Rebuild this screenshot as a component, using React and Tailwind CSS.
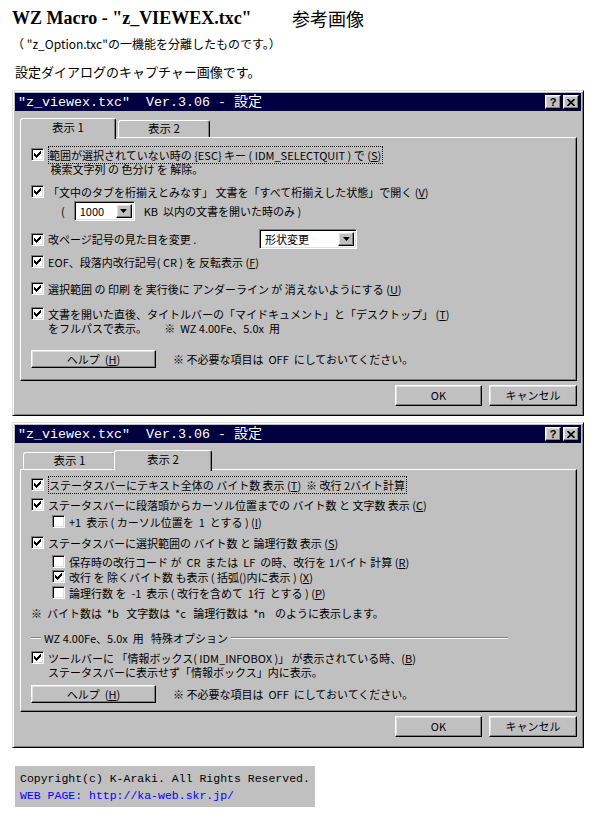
import React from 'react';

const raised =
  'border border-t-white border-l-white border-r-black border-b-black shadow-[inset_-1px_-1px_#808080,inset_1px_1px_#dfdfdf]';
const sunken =
  'border border-t-[#808080] border-l-[#808080] border-r-white border-b-white shadow-[inset_1px_1px_#000,inset_-1px_-1px_#dfdfdf]';
const jp = "font-['Noto_Sans_CJK_JP',sans-serif]";
const mono = "font-['Liberation_Mono','Noto_Sans_CJK_JP',monospace]";

// 7x7 pixel check mark, row by row
const CHECK_ROWS = [[6], [5, 6], [0, 4, 5, 6], [0, 1, 3, 4, 5], [0, 1, 2, 3, 4], [1, 2, 3], [2]];

function Check({ on }) {
  return (
    <span className={`flex h-[13px] w-[13px] shrink-0 items-center justify-center bg-white ${sunken}`}>
      {on && (
        <svg width="7" height="7" viewBox="0 0 7 7" shapeRendering="crispEdges">
          {CHECK_ROWS.map((cols, y) =>
            cols.map((x) => <rect key={`${x}-${y}`} x={x} y={y} width="1" height="1" fill="#000" />)
          )}
        </svg>
      )}
    </span>
  );
}

const K = ({ children }) => (
  <>
    (<u className="underline-offset-1">{children}</u>)
  </>
);

function Row({ on, className = '', children }) {
  return (
    <div className={`flex items-start gap-[4px] ${className}`}>
      <Check on={on} />
      <div className="whitespace-pre leading-[14px]">{children}</div>
    </div>
  );
}

function Btn({ className = '', children }) {
  return (
    <div className={`flex items-center justify-center bg-[#c0c0c0] text-[11px] ${raised} ${className}`}>
      {children}
    </div>
  );
}

function Combo({ className = '', children }) {
  return (
    <div className={`flex h-[20px] items-stretch bg-white p-[2px] ${sunken} ${className}`}>
      <span className="flex-1 pl-[3px] text-[11px] leading-[14px]">{children}</span>
      <span className={`flex w-[16px] items-center justify-center bg-[#c0c0c0] ${raised}`}>
        <svg width="7" height="4" viewBox="0 0 7 4">
          <path d="M0 0h7L3.5 4z" fill="#000" />
        </svg>
      </span>
    </div>
  );
}

function TitleBar() {
  return (
    <div className="flex h-[18px] shrink-0 items-center justify-between bg-[#000040] pl-[3px] pr-[2px]">
      <span className={`${mono} whitespace-pre text-[13.33px] leading-[18px] text-white`}>
        "z_viewex.txc"  Ver.3.06 - <span className="text-[14px]">設定</span>
      </span>
      <div className="flex gap-[2px]">
        <span className={`flex h-[14px] w-[16px] items-center justify-center bg-[#c0c0c0] ${raised}`}>
          <span className="font-['Liberation_Sans',sans-serif] text-[11px] font-bold leading-none">?</span>
        </span>
        <span className={`flex h-[14px] w-[16px] items-center justify-center bg-[#c0c0c0] ${raised}`}>
          <svg width="8" height="7" viewBox="0 0 8 7">
            <path d="M0.5 0l7 7M7.5 0l-7 7" stroke="#000" strokeWidth="1.6" />
          </svg>
        </span>
      </div>
    </div>
  );
}

function Tab({ sel, className = '', children }) {
  return (
    <div
      className={`flex items-center justify-center rounded-t-[3px] border border-b-0 border-t-white border-l-white border-r-black bg-[#c0c0c0] text-[11.5px] shadow-[inset_-1px_0_#808080] ${
        sel ? 'relative z-10 -mb-[2px] h-[21px] pb-[2px]' : 'h-[17px]'
      } ${className}`}
    >
      {children}
    </div>
  );
}

function Dialog({ tab, panelClass, children }) {
  return (
    <div
      className={`ml-[12px] flex h-[326px] w-[572px] flex-col border border-t-[#dfdfdf] border-l-[#dfdfdf] border-r-black border-b-black bg-[#c0c0c0] p-[2px] shadow-[inset_1px_1px_#fff,inset_-1px_-1px_#808080] ${jp}`}
    >
      <TitleBar />
      <div className="flex flex-col pl-[5px] pr-[4px]">
        <div className="mt-[7px] flex h-[19px] items-end">
          {tab === 1 ? (
            <>
              <Tab sel className="w-[96px]">表示 1</Tab>
              <Tab className="ml-[2px] w-[92px]">表示 2</Tab>
            </>
          ) : (
            <>
              <Tab className="ml-[3px] w-[93px]">表示 1</Tab>
              <Tab sel className="-ml-[2px] w-[98px]">表示 2</Tab>
            </>
          )}
        </div>
        <div
          className={`flex flex-col border border-t-white border-l-white border-r-black border-b-black pl-[10px] text-[11px] shadow-[inset_-1px_-1px_#808080] ${panelClass}`}
        >
          {children}
        </div>
        <div className="mt-[4px] flex justify-end gap-[7px]">
          <Btn className="h-[21px] w-[87px]">OK</Btn>
          <Btn className="h-[21px] w-[88px]">キャンセル</Btn>
        </div>
      </div>
    </div>
  );
}

function HelpRow({ className = '' }) {
  return (
    <div className={`flex items-center ${className}`}>
      <Btn className="h-[18px] w-[125px] whitespace-pre">
        ヘルプ  <K>H</K>
      </Btn>
      <span className="ml-[17px] whitespace-pre">※ 不必要な項目は  OFF  にしておいてください。</span>
    </div>
  );
}

export default function App() {
  return (
    <div className="h-[820px] w-[600px] bg-white text-black">
      <div className="px-[12px] pt-[5px]">
        <div className="flex h-[26px] items-center">
          <span className="w-[280px] font-['Liberation_Serif',serif] text-[18px] font-bold">
            WZ Macro - "z_VIEWEX.txc"
          </span>
          <span className={`${jp} text-[18px]`}>参考画像</span>
        </div>
        <div className={`${jp} mt-[6px] h-[14px] whitespace-pre text-[12px] leading-[14px]`}>
          （ "z_Option.txc"の一機能を分離したものです。）
        </div>
        <div className={`${jp} mt-[13px] ml-[3px] h-[16px] text-[13px] leading-[16px]`}>
          設定ダイアログのキャプチャー画像です。
        </div>
      </div>

      <div className="mt-[10px]">
        <Dialog tab={1} panelClass="h-[244px]">
          <Row on className="mt-[10px]">
            <span className="border border-dotted border-black pr-[1px]">
              範囲が選択されていない時の {'{'}ESC{'}'} キー ( IDM_SELECTQUIT ) で <K>S</K>
            </span>
            {'\n'} 検索文字列 の 色分け を 解除。
          </Row>
          <Row on className="mt-[9px]">
            「文中のタブを桁揃えとみなす」 文書を「すべて桁揃えした状態」で開く <K>V</K>
          </Row>
          <div className="mt-[2px] flex items-center pl-[30px]">
            <span>(</span>
            <Combo className="ml-[9px] w-[61px]">1000</Combo>
            <span className="ml-[9px] whitespace-pre">KB  以内の文書を開いた時のみ )</span>
          </div>
          <div className="mt-[8px] flex items-center gap-[4px]">
            <Check on />
            <span className="w-[207px]">改ページ記号の見た目を変更 .</span>
            <Combo className="w-[98px]">形状変更</Combo>
          </div>
          <Row on className="mt-[6px]">
            EOF、段落内改行記号( CR ) を 反転表示 <K>F</K>
          </Row>
          <Row on className="mt-[13px]">
            選択範囲 の 印刷 を 実行後に アンダーライン が 消えないようにする <K>U</K>
          </Row>
          <Row on className="mt-[11px]">
            文書を開いた直後、タイトルバーの「マイドキュメント」と「デスクトップ」 <K>T</K>
            {'\n'}をフルパスで表示。       ※  WZ 4.00Fe、5.0x  用
          </Row>
          <HelpRow className="mt-[15px]" />
        </Dialog>
      </div>

      <div className="mt-[6px]">
        <Dialog tab={2} panelClass="h-[243px]">
          <Row on className="mt-[8px]">
            <span className="border border-dotted border-black pr-[1px]">
              ステータスバーにテキスト全体の バイト数 表示 <K>T</K>  ※ 改行 2バイト計算
            </span>
          </Row>
          <Row on className="mt-[6px]">
            ステータスバーに段落頭からカーソル位置までの バイト数 と 文字数 表示 <K>C</K>
          </Row>
          <Row className="mt-[3px] ml-[21px]">+1  表示 ( カーソル位置を  1  とする ) <K>I</K></Row>
          <Row on className="mt-[7px]">
            ステータスバーに選択範囲の バイト数 と 論理行数 表示 <K>S</K>
          </Row>
          <Row className="mt-[5px] ml-[21px]">
            保存時の改行コード が  CR  または  LF  の時、改行を 1バイト 計算 <K>R</K>
          </Row>
          <Row on className="mt-[1px] ml-[21px]">
            改行 を 除くバイト数 も表示 ( 括弧()内に表示 ) <K>X</K>
          </Row>
          <Row className="mt-[2px] ml-[21px]">
            論理行数 を  -1  表示 ( 改行を含めて  1行  とする ) <K>P</K>
          </Row>
          <div className="mt-[6px] whitespace-pre leading-[14px]">
            ※  バイト数は  *b   文字数は  *c   論理行数は  *n    のように表示します。
          </div>
          <div className="mt-[11px] flex h-[14px] w-[477px] items-center">
            <span className="h-[2px] w-[10px] border-t border-b border-t-[#808080] border-b-white" />
            <span className="whitespace-pre px-[3px] leading-[14px]">WZ 4.00Fe、5.0x  用   特殊オプション</span>
            <span className="h-[2px] flex-1 border-t border-b border-t-[#808080] border-b-white" />
          </div>
          <Row on className="mt-[6px]">
            ツールバーに 「情報ボックス( IDM_INFOBOX )」 が表示されている時、<K>B</K>
            {'\n'}ステータスバーに表示せず「情報ボックス」内に表示。
          </Row>
          <HelpRow className="mt-[6px]" />
        </Dialog>
      </div>

      <div className={`${mono} mt-[18px] ml-[15px] h-[41px] w-[300px] bg-[#c0c0c0] pl-[5px] pt-[4px] text-[11.5px] leading-[17px]`}>
        <div>Copyright(c) K-Araki. All Rights Reserved.</div>
        <div className="text-[#0000ff]">WEB PAGE: http://ka-web.skr.jp/</div>
      </div>
    </div>
  );
}
